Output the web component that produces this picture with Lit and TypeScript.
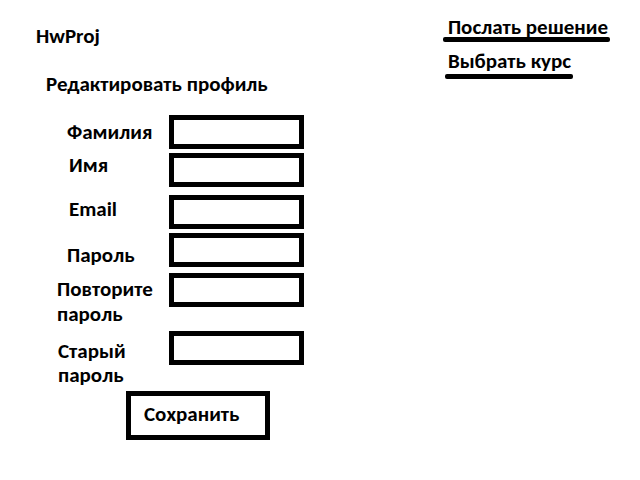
import { LitElement, html, css } from "lit";
import { customElement } from "lit/decorators.js";
import { classMap } from "lit/directives/class-map.js";

interface Field {
  id: string;
  label: string;
  type: string;
  align: "start" | "high" | "middle" | "end" | "lines" | "low";
  space?: "medium" | "wide";
}

const FIELDS: Field[] = [
  { id: "surname", label: "Фамилия", type: "text", align: "middle" },
  { id: "name", label: "Имя", type: "text", align: "start", space: "wide" },
  { id: "email", label: "Email", type: "email", align: "high" },
  { id: "password", label: "Пароль", type: "password", align: "end", space: "medium" },
  { id: "repeat", label: "Повторите пароль", type: "password", align: "lines" },
  { id: "old", label: "Старый пароль", type: "password", align: "low" },
];

@customElement("app-root")
export class AppRoot extends LitElement {
  static styles = css`
    :host {
      display: block;
      min-height: 100vh;
      box-sizing: border-box;
      background: #fff;
      color: #000;
      font: bold 21px/24px Carlito, Calibri, Lato, sans-serif;
    }
    .top {
      display: flex;
      justify-content: space-between;
      align-items: flex-start;
      padding: 15px 30px 0 36px;
    }
    .brand {
      padding-top: 9px;
    }
    nav {
      display: flex;
      flex-direction: column;
      align-items: flex-start;
      gap: 10px;
    }
    nav a {
      position: relative;
      padding: 0 2px 0 5px;
      color: inherit;
      text-decoration: none;
    }
    nav a::after {
      content: "";
      position: absolute;
      left: 0;
      right: 0;
      bottom: -3px;
      height: 5px;
      border-radius: 2px;
      background: #000;
    }
    nav a + a::after {
      left: 2px;
      bottom: -6px;
    }
    h1 {
      margin: 0 0 20px 46px;
      font: inherit;
      line-height: 22px;
    }
    form {
      display: flex;
      flex-direction: column;
      align-items: flex-start;
      padding-left: 57px;
    }
    .row {
      display: grid;
      grid-template-columns: 112px 135px;
      align-items: start;
      margin-bottom: 4px;
    }
    .medium {
      margin-bottom: 6px;
    }
    .wide {
      margin-bottom: 8px;
    }
    label {
      padding-left: 10px;
    }
    .start label {
      padding-left: 12px;
    }
    .high label {
      padding: 2px 0 0 12px;
    }
    .middle label {
      align-self: center;
    }
    .end label {
      align-self: end;
    }
    .lines label,
    .low label {
      width: min-content;
      padding: 4px 0 0;
      line-height: 25px;
    }
    .low label {
      padding: 8px 0 0 1px;
      line-height: 24px;
    }
    input {
      box-sizing: border-box;
      width: 100%;
      height: 34px;
      margin: 0;
      padding: 0 6px;
      border: 5px solid #000;
      border-radius: 0;
      background: #fff;
      color: inherit;
      font: inherit;
      outline: none;
    }
    button {
      box-sizing: border-box;
      width: 144px;
      height: 49px;
      margin: 0 0 0 69px;
      padding: 0 13px 3px;
      border: 5px solid #000;
      border-radius: 0;
      background: #fff;
      color: inherit;
      font: inherit;
      text-align: left;
    }
  `;

  render() {
    return html`
      <header class="top">
        <div class="brand">HwProj</div>
        <nav>
          <a href="#submit">Послать решение</a>
          <a href="#course">Выбрать курс</a>
        </nav>
      </header>
      <main>
        <h1>Редактировать профиль</h1>
        <form @submit=${(e: Event) => e.preventDefault()}>
          ${FIELDS.map(
            (f) => html`
              <div
                class=${classMap({
                  row: true,
                  [f.align]: true,
                  medium: f.space === "medium",
                  wide: f.space === "wide",
                })}
              >
                <label for=${f.id}>${f.label}</label>
                <input id=${f.id} name=${f.id} type=${f.type} />
              </div>
            `
          )}
          <button type="submit">Сохранить</button>
        </form>
      </main>
    `;
  }
}
